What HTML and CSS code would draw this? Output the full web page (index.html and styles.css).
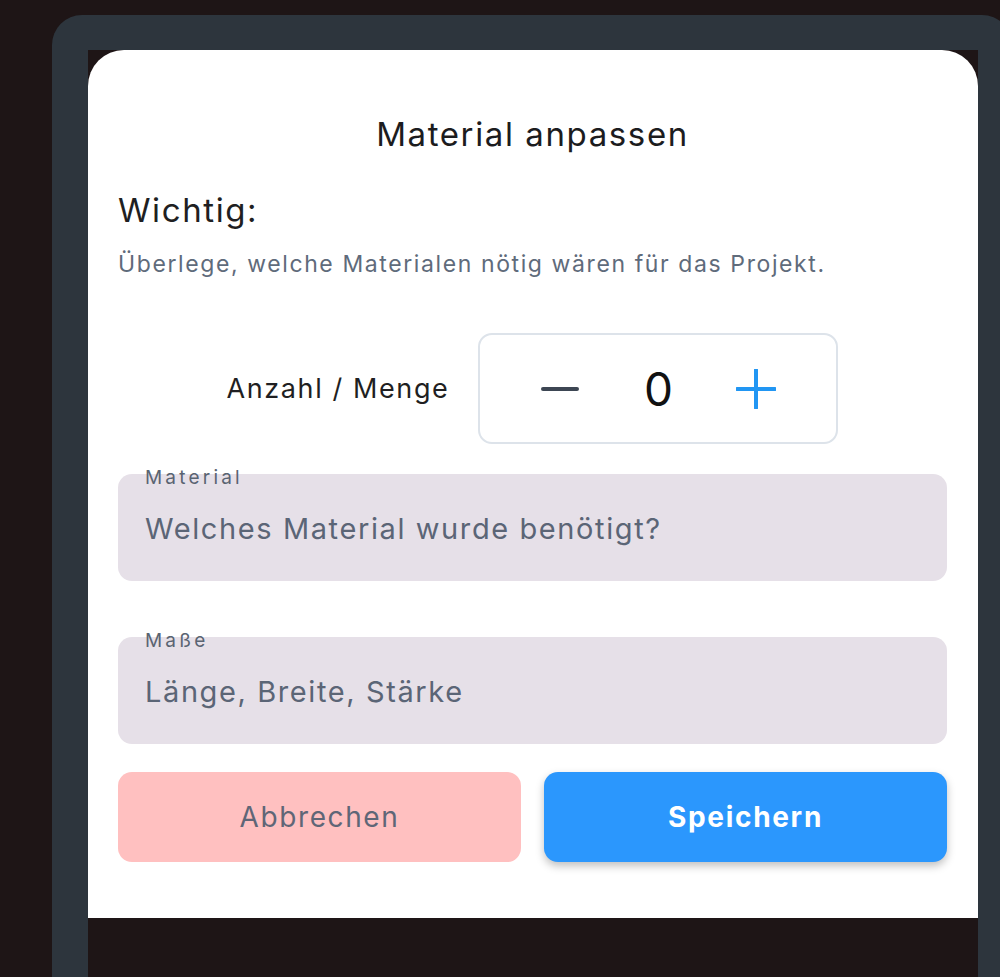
FILE: index.html
```html
<!DOCTYPE html>
<html lang="de">

<head>
    <meta charset="UTF-8">
    <meta name="viewport" content="width=device-width, initial-scale=1.0">
    <title>Material anpassen</title>
    <link rel="stylesheet" href="styles.css">
</head>

<body>

    <div class="frame">
        <div class="screen">
            <div class="card">
                <h2 class="title">Material anpassen</h2>

                <div class="hint">
                    <h3>Wichtig:</h3>
                    <p>Überlege, welche Materialen nötig wären für das Projekt.</p>
                </div>

                <div class="amount-row">
                    <span class="amount-label">Anzahl / Menge</span>
                    <div class="stepper">
                        <button class="step-btn minus" type="button">
                            <svg width="40" height="40" viewBox="0 0 40 40">
                                <path d="M3 20 H37" stroke="#3d4653" stroke-width="4" stroke-linecap="round" />
                            </svg>
                        </button>
                        <span class="count">0</span>
                        <button class="step-btn plus" type="button">
                            <svg width="40" height="40" viewBox="0 0 40 40">
                                <path d="M1 20 H39 M20 1 V39" stroke="#2196f3" stroke-width="4" stroke-linecap="round" />
                            </svg>
                        </button>
                    </div>
                </div>

                <div class="field">
                    <label for="material">Material</label>
                    <input type="text" id="material" placeholder="Welches Material wurde benötigt?">
                </div>

                <div class="field">
                    <label for="masse">Maße</label>
                    <input type="text" id="masse" placeholder="Länge, Breite, Stärke">
                </div>

                <div class="actions">
                    <button class="btn btn-cancel" type="button">Abbrechen</button>
                    <button class="btn btn-save" type="button">Speichern</button>
                </div>
            </div>
        </div>
    </div>

</body>

</html>
```

FILE: styles.css
```css
body {
    font-family: Inter, "Noto Sans", sans-serif;
    letter-spacing: 0.1em;
    margin: 0;
    padding: 15px 0 0 52px;
    background-color: #1e1516;
    overflow: hidden;
    height: 977px;
    box-sizing: border-box;
}

.frame {
    width: 960px;
    height: 962px;
    background-color: #2d353d;
    border-radius: 30px 30px 0 0;
    padding: 35px 0 0 36px;
    box-sizing: border-box;
}

.screen {
    width: 890px;
    height: 927px;
    background-color: #1e1516;
}

.card {
    height: 868px;
    background-color: #fff;
    border-radius: 36px 36px 0 0;
    padding: 64px 31px 0 30px;
    box-sizing: border-box;
}

.title {
    margin: 0;
    text-align: center;
    font-size: 33px;
    font-weight: 400;
    line-height: 40px;
    color: #1c1c1e;
}

.hint {
    margin-top: 36px;
}

.hint h3 {
    margin: 0;
    font-size: 33px;
    font-weight: 400;
    line-height: 40px;
    color: #1f1f22;
}

.hint p {
    margin: 20px 0 0;
    font-size: 23px;
    line-height: 28px;
    color: #5f6b7b;
}

.amount-row {
    display: flex;
    justify-content: center;
    align-items: center;
    gap: 29px;
    margin-top: 55px;
}

.amount-label {
    font-size: 27px;
    color: #1f1f22;
}

.stepper {
    width: 360px;
    height: 111px;
    border: 2px solid #dde3ea;
    border-radius: 14px;
    box-sizing: border-box;
    display: flex;
    align-items: center;
    justify-content: space-between;
    padding: 0 60px;
}

.step-btn {
    background: none;
    border: none;
    padding: 0;
    width: 40px;
    height: 40px;
}

.step-btn svg {
    display: block;
}

.count {
    font-size: 46px;
    letter-spacing: 0;
    color: #111;
}

.field {
    position: relative;
    margin-top: 30px;
}

.field + .field {
    margin-top: 56px;
}

.field label {
    position: absolute;
    left: 27px;
    top: -6px;
    font-size: 19px;
    line-height: 20px;
    color: #5a6472;
    letter-spacing: 3.2px;
}

.field input {
    width: 100%;
    height: 107px;
    border: none;
    border-radius: 14px;
    background-color: #e6e0e8;
    padding: 2px 27px 0;
    box-sizing: border-box;
    font-family: inherit;
    letter-spacing: inherit;
    font-size: 29px;
    color: #3a4250;
}

.field input::placeholder {
    color: #5b6576;
}

.actions {
    display: flex;
    gap: 23px;
    margin-top: 28px;
}

.btn {
    flex: 1;
    height: 90px;
    border: none;
    border-radius: 14px;
    font-family: inherit;
    letter-spacing: inherit;
    font-size: 28px;
}

.btn-cancel {
    background-color: #ffc0c0;
    color: #5f6677;
}

.btn-save {
    background-color: #2b97fd;
    color: #fff;
    font-weight: 700;
    letter-spacing: 0.06em;
    box-shadow: 0 4px 8px rgba(0, 0, 0, 0.25);
}
```
